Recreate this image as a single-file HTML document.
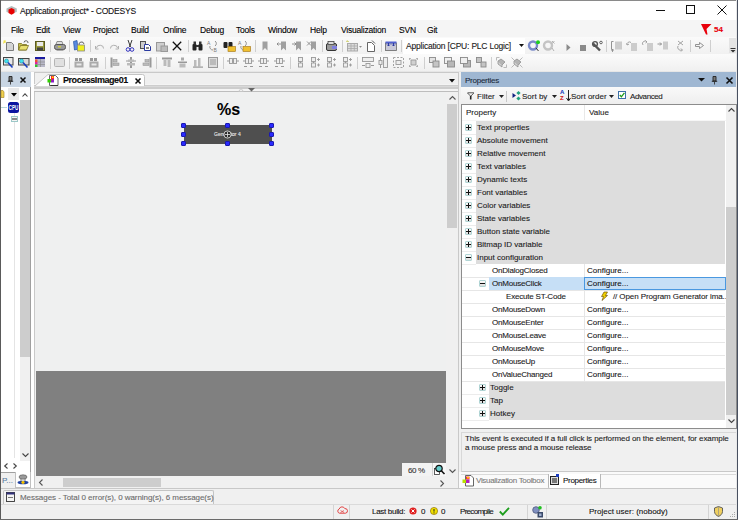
<!DOCTYPE html>
<html><head><meta charset="utf-8">
<style>
*{margin:0;padding:0;box-sizing:border-box}
html,body{width:738px;height:520px;overflow:hidden;background:#f0f0f0;font-family:"Liberation Sans",sans-serif;font-size:8px;color:#000;position:relative}
.a{position:absolute}
.t{position:absolute;white-space:nowrap;line-height:8px;font-size:8px;-webkit-text-stroke:0.1px currentColor}
svg{position:absolute;overflow:visible}
</style></head><body>
<!-- ===== frame ===== -->
<div class="a" style="left:0;top:0;width:738px;height:1px;background:#8a8a8a"></div>
<div class="a" style="left:0;top:0;width:1px;height:520px;background:#5a5a5a"></div>
<div class="a" style="left:736px;top:0;width:1px;height:520px;background:#e8e8e8"></div><div class="a" style="left:737px;top:0;width:1px;height:520px;background:#485060"></div>

<!-- ===== title bar ===== -->
<div class="a" style="left:1px;top:1px;width:735px;height:19px;background:#fff"></div>
<svg style="left:6px;top:6px" width="11" height="9"><polygon points="0.5,2.5 5.5,0 10.8,2.5 10.8,6 5.5,7.5 0.5,6" fill="#b4bcbc"/><polygon points="5.5,2 8.5,3.5 8.5,7 5.5,8.8 2.5,7 2.5,3.5" fill="#e80000"/></svg>
<div class="t" style="left:20px;top:7px;font-size:8.5px;letter-spacing:-0.2px;color:#111">Application.project* - CODESYS</div>
<!-- window controls -->
<div class="a" style="left:656px;top:10px;width:9px;height:1px;background:#111"></div>
<div class="a" style="left:686px;top:5px;width:9px;height:9px;border:1px solid #111"></div>
<svg style="left:717px;top:5px" width="10" height="10"><path d="M0.5,0.5 L9.5,9.5 M9.5,0.5 L0.5,9.5" stroke="#111" stroke-width="1"/></svg>

<!-- ===== menu bar ===== -->
<div class="a" style="left:1px;top:20px;width:735px;height:17px;background:#f5f5f5"></div>
<div class="t" style="left:11px;top:26px;font-size:8.5px;letter-spacing:-0.2px">File</div>
<div class="t" style="left:36px;top:26px;font-size:8.5px;letter-spacing:-0.2px">Edit</div>
<div class="t" style="left:63px;top:26px;font-size:8.5px;letter-spacing:-0.2px">View</div>
<div class="t" style="left:93px;top:26px;font-size:8.5px;letter-spacing:-0.2px">Project</div>
<div class="t" style="left:131px;top:26px;font-size:8.5px;letter-spacing:-0.2px">Build</div>
<div class="t" style="left:163px;top:26px;font-size:8.5px;letter-spacing:-0.2px">Online</div>
<div class="t" style="left:200px;top:26px;font-size:8.5px;letter-spacing:-0.2px">Debug</div>
<div class="t" style="left:236px;top:26px;font-size:8.5px;letter-spacing:-0.2px">Tools</div>
<div class="t" style="left:268px;top:26px;font-size:8.5px;letter-spacing:-0.2px">Window</div>
<div class="t" style="left:310px;top:26px;font-size:8.5px;letter-spacing:-0.2px">Help</div>
<div class="t" style="left:341px;top:26px;font-size:8.5px;letter-spacing:-0.2px">Visualization</div>
<div class="t" style="left:399px;top:26px;font-size:8.5px;letter-spacing:-0.2px">SVN</div>
<div class="t" style="left:427px;top:26px;font-size:8.5px;letter-spacing:-0.2px">Git</div>
<svg style="left:701px;top:24px" width="12" height="11"><polygon points="0,0 10.5,0 5.5,5 6.5,10.5 5,10.5" fill="#e8000b"/></svg>
<div class="t" style="left:714px;top:26px;font-weight:bold;color:#e8000b">54</div>

<!-- ===== toolbars ===== -->
<div class="a" style="left:1px;top:37px;width:735px;height:17px;background:linear-gradient(#fafafa,#f1f1f1)"></div>
<div class="a" style="left:1px;top:54px;width:735px;height:17px;background:linear-gradient(#fbfbfb,#f0f0f0)"></div>
<div class="a" style="left:1px;top:71px;width:735px;height:1px;background:#e6e6e6"></div>
<!--TB_START-->
<svg style="left:3px;top:40px" width="11" height="11"><path d="M3.5,2.5h5l2,2v6h-7z" fill="#d4d4d4" stroke="#7a7a7a"/><path d="M1,0l1,2.5M0,2h3M2.5,0.5l-2,3" stroke="#f0e040" stroke-width="0.9"/></svg>
<svg style="left:18px;top:41px" width="11" height="10"><path d="M0.5,2.5h3l1,1h4v5.5h-8z" fill="#c8c050" stroke="#7a7020" stroke-width="0.8"/><path d="M0.5,9 L2.5,4.5h8l-2,4.5z" fill="#e8e070" stroke="#7a7020" stroke-width="0.8"/><path d="M6,1.5 a2,2 0 0 1 4,0.5" fill="none" stroke="#555" stroke-width="0.9"/></svg>
<svg style="left:35px;top:41px" width="10" height="10"><rect x="0.5" y="0.5" width="9" height="9" fill="#9a9a40" stroke="#5a5a20"/><rect x="2" y="1" width="6" height="4" fill="#e8e8e8"/><rect x="2" y="6.5" width="6" height="3" fill="#404040"/></svg>
<div class="a" style="left:50px;top:40px;width:1px;height:12px;background:#cfcfcf"></div>
<svg style="left:54px;top:41px" width="12" height="10"><path d="M3,0.5h5l1,3h-7z" fill="#e0e0e0" stroke="#777" stroke-width="0.8"/><rect x="0.5" y="3.5" width="11" height="5" rx="2" fill="#999" stroke="#555"/><rect x="4" y="5" width="3" height="1.5" fill="#d0d040"/><rect x="2.5" y="8" width="7" height="1.5" fill="#666"/></svg>
<div class="a" style="left:69px;top:40px;width:1px;height:12px;background:#cfcfcf"></div>
<svg style="left:73px;top:40px" width="13" height="12"><path d="M0.5,1.5 L4,0.5 L5,9 L1.5,10z" fill="#5a8ae0" stroke="#2050a0" stroke-width="0.7"/><rect x="4.5" y="5" width="7" height="6" fill="#f0f020" stroke="#888" stroke-width="0.8"/><path d="M6,5 a2.5,2.5 0 0 1 5,-1" fill="none" stroke="#555" stroke-width="0.9"/></svg>
<div class="a" style="left:90px;top:40px;width:1px;height:12px;background:#cfcfcf"></div>
<svg style="left:95px;top:43px" width="9" height="7"><path d="M1.5,5 a3.5,3 0 0 1 7,0.5" fill="none" stroke="#b0b0b0" stroke-width="1"/><path d="M0.5,3v3h3" fill="none" stroke="#b0b0b0" stroke-width="1"/></svg>
<svg style="left:110px;top:43px" width="9" height="7"><path d="M7.5,5 a3.5,3 0 0 0 -7,0.5" fill="none" stroke="#b0b0b0" stroke-width="1"/><path d="M8.5,3v3h-3" fill="none" stroke="#b0b0b0" stroke-width="1"/></svg>
<svg style="left:126px;top:40px" width="8" height="12"><path d="M2,0l2.5,7M6,0l-2.5,7" stroke="#222" stroke-width="0.9"/><circle cx="2" cy="9.5" r="1.8" fill="none" stroke="#3030c0" stroke-width="1"/><circle cx="6" cy="9.5" r="1.8" fill="none" stroke="#3030c0" stroke-width="1"/></svg>
<svg style="left:140px;top:41px" width="12" height="10"><rect x="0.5" y="0.5" width="5" height="7" fill="#ccc" stroke="#444" stroke-width="0.9"/><path d="M4.5,3.5h4l2,2v4h-6z" fill="#fff" stroke="#2a3aa0" stroke-width="1"/><rect x="6" y="6" width="3" height="2" fill="#888"/></svg>
<svg style="left:156px;top:41px" width="12" height="11"><rect x="0.5" y="1.5" width="8" height="8.5" fill="#cfcfcf" stroke="#999"/><rect x="5" y="5" width="6.5" height="5.5" fill="#bbb" stroke="#999"/></svg>
<svg style="left:172px;top:41px" width="10" height="10"><path d="M0.8,0.8L9.2,9.2M9.2,0.8L0.8,9.2" stroke="#111" stroke-width="1.3"/></svg>
<div class="a" style="left:188px;top:40px;width:1px;height:12px;background:#cfcfcf"></div>
<svg style="left:192px;top:41px" width="11" height="10"><rect x="0.5" y="3" width="4" height="6.5" rx="1" fill="#222"/><rect x="6.5" y="3" width="4" height="6.5" rx="1" fill="#222"/><rect x="1.5" y="0.5" width="2.5" height="3" fill="#333"/><rect x="7" y="0.5" width="2.5" height="3" fill="#333"/><rect x="4" y="4" width="3" height="2" fill="#333"/></svg>
<svg style="left:207px;top:40px" width="13" height="12"><text x="0" y="5" font-size="5" fill="#777" font-family="Liberation Sans">A</text><text x="6.5" y="11.5" font-size="5" fill="#777" font-family="Liberation Sans">B</text><path d="M3,6 a3,3 0 0 0 3,4" fill="none" stroke="#888" stroke-width="0.9"/><path d="M8,1 a3,3 0 0 1 0,5" fill="none" stroke="#888" stroke-width="0.9"/></svg>
<svg style="left:223px;top:40px" width="13" height="12"><rect x="0.5" y="2" width="4" height="6" rx="1" fill="#222"/><rect x="5.5" y="2" width="4" height="6" rx="1" fill="#222"/><rect x="5" y="6.5" width="7.5" height="5" fill="#f0c030" stroke="#a07010" stroke-width="0.6"/></svg>
<svg style="left:238px;top:40px" width="13" height="12"><text x="0" y="5" font-size="5" fill="#777" font-family="Liberation Sans">A</text><path d="M3,6 a3,3 0 0 0 3,4" fill="none" stroke="#888" stroke-width="0.9"/><path d="M7,1 a3,3 0 0 1 0,5" fill="none" stroke="#888" stroke-width="0.9"/><rect x="5" y="6.5" width="7.5" height="5" fill="#f0c030" stroke="#a07010" stroke-width="0.6"/></svg>
<div class="a" style="left:255px;top:40px;width:1px;height:12px;background:#cfcfcf"></div>
<svg style="left:262px;top:41px" width="6" height="10"><path d="M0.5,0.5h5v9l-2.5,-2.5l-2.5,2.5z" fill="#a0a0a0"/></svg>
<svg style="left:277px;top:41px" width="10" height="10"><path d="M4,0.5h5v9l-2.5,-2.5l-2.5,2.5z" fill="#a0a0a0"/><path d="M0,3h4M1.5,1.5l-1.5,1.5l1.5,1.5" stroke="#888" stroke-width="0.9" fill="none"/></svg>
<svg style="left:292px;top:41px" width="10" height="10"><path d="M4,0.5h5v9l-2.5,-2.5l-2.5,2.5z" fill="#a0a0a0"/><path d="M0,3h4M2.5,1.5l1.5,1.5l-1.5,1.5" stroke="#888" stroke-width="0.9" fill="none"/></svg>
<svg style="left:307px;top:41px" width="10" height="10"><path d="M4,0.5h5v9l-2.5,-2.5l-2.5,2.5z" fill="#a0a0a0"/><path d="M0,0.5l4,4M4,0.5l-4,4" stroke="#888" stroke-width="0.9"/></svg>
<div class="a" style="left:322px;top:40px;width:1px;height:12px;background:#cfcfcf"></div>
<svg style="left:326px;top:41px" width="12" height="10"><rect x="0.5" y="2.5" width="10" height="7" rx="1.5" fill="#9a9a9a" stroke="#333"/><rect x="2" y="0.5" width="6" height="3" fill="#ddd" stroke="#444" stroke-width="0.8"/><rect x="6" y="5" width="5" height="3" fill="#8080e0"/></svg>
<div class="a" style="left:342px;top:40px;width:1px;height:12px;background:#cfcfcf"></div>
<svg style="left:346px;top:40px" width="17" height="12"><path d="M1,0l1,2M0,1.5h3" stroke="#d0d070" stroke-width="0.8"/><rect x="1.5" y="3.5" width="10" height="7.5" fill="#ddd" stroke="#aaa"/><path d="M1.5,6h10M1.5,8.5h10M5,3.5v7.5M8.3,3.5v7.5" stroke="#aaa" stroke-width="0.8"/><polygon points="13,6 16,6 14.5,7.8" fill="#888"/></svg>
<svg style="left:366px;top:40px" width="10" height="12"><path d="M1.5,2.5h4l3,3v6h-7z" fill="#fff" stroke="#555" stroke-width="0.9"/><path d="M6,0.5l3,3" stroke="#444" stroke-width="0.9"/></svg>
<div class="a" style="left:381px;top:40px;width:1px;height:12px;background:#cfcfcf"></div>
<svg style="left:385px;top:41px" width="12" height="10"><rect x="0.5" y="2" width="11" height="7.5" fill="#c8c8d8" stroke="#666" stroke-width="0.8"/><rect x="0.5" y="0.5" width="11" height="2" fill="#5060d0"/><path d="M3.5,2v3l-1.5,-1.5M3.5,5l1.5,-1.5M8.5,2v3l-1.5,-1.5M8.5,5l1.5,-1.5" stroke="#2030a0" stroke-width="0.9" fill="none"/></svg>
<div class="a" style="left:401px;top:40px;width:1px;height:12px;background:#cfcfcf"></div>
<div class="a" style="left:403px;top:38px;width:122px;height:16px;background:#fff"></div>
<div class="t" style="left:406px;top:42px;color:#1a1a1a;font-size:8.5px;letter-spacing:-0.2px">Application [CPU: PLC Logic]</div>
<svg style="left:519px;top:44px" width="5" height="3"><polygon points="0,0 5,0 2.5,3" fill="#111"/></svg>
<svg style="left:528px;top:40px" width="13" height="12"><circle cx="5" cy="5.5" r="4" fill="none" stroke="#7a8ac8" stroke-width="2.4"/><circle cx="10" cy="2.2" r="2" fill="#20d020"/><path d="M8,8l2.5,3" stroke="#333" stroke-width="1"/></svg>
<svg style="left:543px;top:40px" width="12" height="12"><circle cx="5" cy="5.5" r="4" fill="none" stroke="#c4c4c4" stroke-width="2.4"/><path d="M9,1l2.5,2.5M11.5,1l-2.5,2.5M9,8l2,3" stroke="#aaa" stroke-width="0.9"/></svg>
<svg style="left:566px;top:44px" width="5" height="7"><polygon points="0.5,0 4.5,3.5 0.5,7" fill="#8a8a8a"/></svg>
<svg style="left:580px;top:45px" width="6" height="6"><rect x="0" y="0" width="6" height="6" fill="#8a8a8a"/></svg>
<svg style="left:592px;top:41px" width="11" height="11"><path d="M1,2.5 L8,9.5" stroke="#555" stroke-width="2.4"/><circle cx="3" cy="3" r="2.4" fill="none" stroke="#555" stroke-width="1.4"/><circle cx="9" cy="1.5" r="1.3" fill="none" stroke="#555" stroke-width="0.9"/></svg>
<div class="a" style="left:606px;top:40px;width:1px;height:12px;background:#cfcfcf"></div>
<svg style="left:611px;top:40px" width="12" height="12"><rect x="4" y="1.5" width="7" height="8" fill="#ccc"/><path d="M2.5,1.5h-2v8h2M1.5,9.5v2M0.5,10.5l1,1l1,-1" stroke="#888" stroke-width="0.9" fill="none"/></svg>
<svg style="left:626px;top:40px" width="12" height="12"><rect x="5" y="3" width="6" height="8" fill="#ccc"/><path d="M1,5 a2.5,2.5 0 0 1 4,-2.5M0.5,3.5l1,1.5l1.5,-1" stroke="#999" stroke-width="0.9" fill="none"/></svg>
<svg style="left:642px;top:40px" width="12" height="12"><rect x="5" y="3" width="6" height="8" fill="#ccc"/><path d="M1,5 a2.5,2.5 0 0 1 4,-3M3.5,0.5l1.5,1.5l-1.5,1" stroke="#999" stroke-width="0.9" fill="none"/></svg>
<svg style="left:657px;top:40px" width="12" height="12"><rect x="6" y="1.5" width="5" height="8" fill="#ccc"/><path d="M0.5,4h4M3,2.5l1.5,1.5l-1.5,1.5" stroke="#888" stroke-width="0.9" fill="none"/></svg>
<svg style="left:676px;top:40px" width="9" height="12"><path d="M2,1l5,4M7,1l-5,4M2,6 a3,3 0 0 0 4,4M5,8.5l1.5,1.5l-1.5,1.5" stroke="#999" stroke-width="0.9" fill="none"/></svg>
<div class="a" style="left:690px;top:40px;width:1px;height:12px;background:#cfcfcf"></div>
<svg style="left:695px;top:42px" width="9" height="7"><path d="M0.5,2.5h4v-2l4,3l-4,3v-2h-4z" fill="#f4f4f4" stroke="#888" stroke-width="0.9"/></svg>
<div class="a" style="left:710px;top:40px;width:1px;height:12px;background:#cfcfcf"></div>
<div class="a" style="left:729px;top:38px;width:7px;height:15px;background:#e4e4e4"></div>
<svg style="left:730px;top:48px" width="6" height="5"><rect x="0.5" y="0" width="5" height="1" fill="#333"/><polygon points="0.5,2 5.5,2 3,4.5" fill="#333"/></svg>
<svg style="left:3px;top:57px" width="11" height="11"><rect x="0.5" y="0.5" width="9.5" height="7.5" fill="#e8e8e8" stroke="#444"/><circle cx="3.5" cy="4" r="2" fill="#40e0f0" stroke="#2090a0" stroke-width="0.6"/><path d="M5,5.5L9.5,10.5" stroke="#1a40c0" stroke-width="1.6"/></svg>
<svg style="left:18px;top:57px" width="12" height="11"><rect x="0.5" y="1.5" width="10.5" height="6.5" fill="#d8d8d8" stroke="#444"/><circle cx="3.5" cy="4" r="2" fill="#40e0f0" stroke="#2090a0" stroke-width="0.6"/><path d="M5,5.5L9.5,10.5" stroke="#1a40c0" stroke-width="1.6"/></svg>
<svg style="left:35px;top:57px" width="10" height="10"><rect x="0" y="0" width="10" height="10" fill="#b8b8c8"/><rect x="0" y="0" width="10" height="2" fill="#1a1aa0"/><rect x="0" y="2.5" width="2.5" height="2.5" fill="#f05030"/><rect x="0" y="5" width="2.5" height="2.5" fill="#e020a0"/><rect x="0" y="7.5" width="2.5" height="2.5" fill="#30c030"/><path d="M2.5,5h7.5M2.5,7.5h7.5M5.5,2v8" stroke="#888" stroke-width="0.6"/></svg>
<div class="a" style="left:50px;top:57px;width:1px;height:12px;background:#cfcfcf"></div>
<svg style="left:54px;top:58px" width="11" height="9"><rect x="0.5" y="0.5" width="10" height="8" rx="1" fill="#e0e0e0" stroke="#b4b4b4"/></svg>
<div class="a" style="left:69px;top:57px;width:1px;height:12px;background:#cfcfcf"></div>
<svg style="left:74px;top:57px" width="10" height="11"><rect x="1" y="1" width="3" height="3" fill="#999"/><rect x="5" y="1" width="3" height="3" fill="#999"/><rect x="0.5" y="4.5" width="9" height="6" fill="#aaa"/><rect x="2.5" y="6.5" width="5" height="2" fill="#e8e8e8"/></svg>
<svg style="left:89px;top:57px" width="10" height="11"><rect x="1" y="1" width="3" height="3" fill="#999"/><rect x="5" y="1" width="3" height="3" fill="#999"/><rect x="0.5" y="4.5" width="9" height="6" fill="#aaa"/><rect x="2.5" y="6.5" width="5" height="2" fill="#e8e8e8"/></svg>
<div class="a" style="left:105px;top:57px;width:1px;height:12px;background:#cfcfcf"></div>
<svg style="left:110px;top:57px" width="10" height="11"><rect x="0.5" y="0.5" width="2" height="10" fill="#999"/><rect x="3" y="2.5" width="4" height="2.5" fill="#bbb" stroke="#999" stroke-width="0.6"/><rect x="3" y="6" width="6" height="2.5" fill="#bbb" stroke="#999" stroke-width="0.6"/></svg>
<svg style="left:126px;top:57px" width="10" height="11"><rect x="4" y="0" width="2" height="11" fill="#999"/><rect x="2" y="2.5" width="6" height="2.5" fill="#bbb"/><rect x="1" y="6" width="8" height="2.5" fill="#bbb"/><path d="M0,4h2M8,4h2" stroke="#999"/></svg>
<svg style="left:142px;top:57px" width="10" height="11"><rect x="7.5" y="0.5" width="2" height="10" fill="#999"/><rect x="3" y="2.5" width="4" height="2.5" fill="#bbb" stroke="#999" stroke-width="0.6"/><rect x="1" y="6" width="6" height="2.5" fill="#bbb" stroke="#999" stroke-width="0.6"/></svg>
<div class="a" style="left:156px;top:57px;width:1px;height:12px;background:#cfcfcf"></div>
<svg style="left:162px;top:57px" width="10" height="11"><rect x="0" y="0.5" width="10" height="2" fill="#999"/><rect x="1.5" y="3" width="3" height="6" fill="#bbb"/><rect x="5.5" y="3" width="3" height="7" fill="#bbb"/></svg>
<svg style="left:178px;top:57px" width="9" height="11"><rect x="3" y="0.5" width="3" height="3" fill="#aaa"/><rect x="0" y="4.5" width="9" height="1.5" fill="#999"/><rect x="1.5" y="6.5" width="6" height="4" fill="#bbb"/></svg>
<svg style="left:193px;top:57px" width="10" height="11"><rect x="1" y="3" width="2.5" height="6.5" fill="#bbb"/><rect x="5" y="1" width="2.5" height="8.5" fill="#bbb"/><rect x="0" y="9.5" width="10" height="1.2" fill="#999"/></svg>
<svg style="left:208px;top:57px" width="10" height="11"><rect x="0.5" y="0.5" width="9" height="10" fill="#ddd" stroke="#999"/><path d="M2,3h6M2,5h6M2,7h6" stroke="#999"/></svg>
<div class="a" style="left:223px;top:57px;width:1px;height:12px;background:#cfcfcf"></div>
<svg style="left:227px;top:57px" width="12" height="11"><rect x="2.5" y="1.5" width="3" height="5" fill="#eee" stroke="#999" stroke-width="0.9"/><rect x="6.5" y="1.5" width="3" height="5" fill="#eee" stroke="#999" stroke-width="0.9"/><path d="M0,4h2.5M5.5,4h1M9.5,4h2.5" stroke="#999"/></svg>
<svg style="left:243px;top:57px" width="11" height="11"><rect x="2.5" y="1.5" width="3" height="5" fill="#eee" stroke="#999" stroke-width="0.9"/><rect x="5.5" y="1.5" width="3" height="5" fill="#eee" stroke="#999" stroke-width="0.9"/><path d="M0,4h2.5M5.5,4h0M8.5,4h2.5" stroke="#999"/><path d="M1,9.5h3M7,9.5h3" stroke="#999"/></svg>
<svg style="left:258px;top:57px" width="11" height="11"><rect x="2.5" y="1.5" width="3" height="5" fill="#eee" stroke="#999" stroke-width="0.9"/><rect x="5.5" y="1.5" width="3" height="5" fill="#eee" stroke="#999" stroke-width="0.9"/><path d="M0,4h2.5M5.5,4h0M8.5,4h2.5" stroke="#999"/><path d="M1,9.5h3M7,9.5h3" stroke="#999"/></svg>
<svg style="left:274px;top:57px" width="11" height="11"><rect x="2.5" y="1.5" width="3" height="5" fill="#eee" stroke="#999" stroke-width="0.9"/><rect x="5.5" y="1.5" width="3" height="5" fill="#eee" stroke="#999" stroke-width="0.9"/><path d="M0,4h2.5M5.5,4h0M8.5,4h2.5" stroke="#999"/><path d="M1,9.5h3M7,9.5h3" stroke="#999"/></svg>
<div class="a" style="left:290px;top:57px;width:1px;height:12px;background:#cfcfcf"></div>
<svg style="left:297px;top:57px" width="11" height="11"><rect x="1.5" y="0.5" width="4" height="4" fill="#eee" stroke="#999" stroke-width="0.9"/><rect x="1.5" y="6" width="4" height="4" fill="#eee" stroke="#999" stroke-width="0.9"/><path d="M3.5,4.5v1.5" stroke="#999"/></svg>
<svg style="left:310px;top:57px" width="11" height="11"><rect x="1.5" y="0.5" width="4" height="4" fill="#eee" stroke="#999" stroke-width="0.9"/><rect x="1.5" y="6" width="4" height="4" fill="#eee" stroke="#999" stroke-width="0.9"/><path d="M3.5,4.5v1.5" stroke="#999"/><path d="M8.5,1v3M8.5,6.5v3M7,2.5h3M7,8h3" stroke="#999" stroke-width="0.9"/></svg>
<svg style="left:326px;top:57px" width="11" height="11"><rect x="1.5" y="0.5" width="4" height="4" fill="#eee" stroke="#999" stroke-width="0.9"/><rect x="1.5" y="6" width="4" height="4" fill="#eee" stroke="#999" stroke-width="0.9"/><path d="M3.5,4.5v1.5" stroke="#999"/><path d="M8.5,1v3M8.5,6.5v3M7,2.5h3M7,8h3" stroke="#999" stroke-width="0.9"/></svg>
<svg style="left:342px;top:57px" width="11" height="11"><rect x="1.5" y="0.5" width="4" height="4" fill="#eee" stroke="#999" stroke-width="0.9"/><rect x="1.5" y="6" width="4" height="4" fill="#eee" stroke="#999" stroke-width="0.9"/><path d="M3.5,4.5v1.5" stroke="#999"/><path d="M8.5,1v3M8.5,6.5v3M7,2.5h3M7,8h3" stroke="#999" stroke-width="0.9"/></svg>
<div class="a" style="left:357px;top:57px;width:1px;height:12px;background:#cfcfcf"></div>
<svg style="left:362px;top:57px" width="12" height="11"><rect x="0.5" y="0.5" width="11" height="4" fill="#eee" stroke="#999" stroke-width="0.9"/><rect x="4" y="6.5" width="4" height="4" fill="#eee" stroke="#999" stroke-width="0.9"/><path d="M0,8.5h3M9,8.5h3" stroke="#999"/></svg>
<svg style="left:378px;top:57px" width="11" height="11"><rect x="5.5" y="0.5" width="4" height="10" fill="#eee" stroke="#999" stroke-width="0.9"/><rect x="1" y="3.5" width="3" height="4" fill="#eee" stroke="#999" stroke-width="0.9"/><path d="M2.5,0v3M2.5,8v3" stroke="#999"/></svg>
<svg style="left:393px;top:57px" width="11" height="11"><rect x="0.5" y="0.5" width="10" height="10" fill="none" stroke="#999" stroke-width="0.9" stroke-dasharray="2,1.5"/><rect x="3" y="3.5" width="5" height="4" fill="#eee" stroke="#999" stroke-width="0.9"/></svg>
<svg style="left:408px;top:57px" width="11" height="11"><rect x="3" y="3" width="5" height="5" fill="#d0d0d0" stroke="#999" stroke-width="0.9"/><path d="M1,1.5h2M1,9.5h2M8,1.5h2M8,9.5h2M1.5,1v2M9.5,1v2M1.5,8v2M9.5,8v2" stroke="#aaa" stroke-width="0.8"/></svg>
<div class="a" style="left:424px;top:57px;width:1px;height:12px;background:#cfcfcf"></div>
<svg style="left:429px;top:57px" width="11" height="11"><rect x="0.5" y="0.5" width="6" height="5" fill="#e4e4e4" stroke="#8a8a8a" stroke-width="0.9"/><rect x="4" y="4" width="6" height="6" fill="#c4c4c4" stroke="#8a8a8a" stroke-width="0.9"/></svg>
<svg style="left:444px;top:57px" width="11" height="11"><rect x="0.5" y="0.5" width="7" height="6" fill="#f0f0f0" stroke="#8a8a8a" stroke-width="0.9"/><rect x="3.5" y="4" width="7" height="6" fill="#b8b8b8" stroke="#8a8a8a" stroke-width="0.9"/></svg>
<svg style="left:460px;top:57px" width="11" height="11"><rect x="3.5" y="3.5" width="7" height="6.5" fill="#b8b8b8" stroke="#8a8a8a" stroke-width="0.9"/><rect x="0.5" y="0.5" width="7" height="6" fill="#f0f0f0" stroke="#8a8a8a" stroke-width="0.9"/></svg>
<svg style="left:476px;top:57px" width="11" height="11"><rect x="0.5" y="0.5" width="5" height="5" fill="#c4c4c4" stroke="#8a8a8a" stroke-width="0.9"/><rect x="5" y="5" width="5" height="5" fill="#c4c4c4" stroke="#8a8a8a" stroke-width="0.9"/></svg>
<div class="a" style="left:491px;top:57px;width:1px;height:12px;background:#cfcfcf"></div>
<svg style="left:496px;top:57px" width="11" height="11"><path d="M0.5,0.5v3M0.5,0.5h3M10.5,10.5v-3M10.5,10.5h-3" stroke="#aaa" stroke-width="0.8"/><path d="M2,4l3,-2l4,3l-3,3z" fill="#b4b4b4" stroke="#909090" stroke-width="0.8"/><path d="M2,4v3l4,3v-2" fill="#d0d0d0" stroke="#909090" stroke-width="0.8"/></svg>
<svg style="left:511px;top:57px" width="12" height="11"><path d="M0.5,0.5l3,3M11.5,0.5l-3,3M0.5,10.5l3,-3M11.5,10.5l-3,-3" stroke="#aaa" stroke-width="0.8"/><path d="M3,4l3,-2l4,3l-3,3z" fill="#b4b4b4" stroke="#909090" stroke-width="0.8"/><path d="M3,4v3l4,3v-2" fill="#d0d0d0" stroke="#909090" stroke-width="0.8"/></svg>
<!--TB_END-->

<!-- ===== left panel ===== -->
<div class="a" style="left:1px;top:72px;width:30px;height:15px;background:#c9d6e4"></div>
<svg style="left:7px;top:76px" width="7" height="9"><path d="M2,0.5h3v4.5h-3z" fill="#777" stroke="#222" stroke-width="0.9"/><path d="M0.8,5.3h5.4" stroke="#222" stroke-width="1"/><path d="M3.5,5.5v3" stroke="#333" stroke-width="0.9"/></svg>
<svg style="left:20px;top:77px" width="6" height="6"><path d="M0.5,0.5 L5.5,5.5 M5.5,0.5 L0.5,5.5" stroke="#111" stroke-width="1.5"/></svg>
<div class="a" style="left:1px;top:87px;width:30px;height:385px;background:#fff"></div>
<div class="a" style="left:30px;top:87px;width:1px;height:385px;background:#a0a0a0"></div>
<div class="a" style="left:1px;top:472px;width:30px;height:1px;background:#a0a0a0"></div>

<svg style="left:1px;top:90px" width="4" height="8"><path d="M0,0.5h2l1,1.5v5.5h-3z" fill="#f0d050" stroke="#a08020" stroke-width="0.6"/></svg>
<div class="a" style="left:8px;top:88px;width:11px;height:12px;background:#e9e9e9"></div>
<svg style="left:11px;top:93px" width="6" height="4"><polygon points="0,0 6,0 3,3.5" fill="#000"/></svg>
<svg style="left:22px;top:93px" width="6" height="4"><path d="M0.5,3.5 L3,0.8 L5.5,3.5" fill="none" stroke="#444" stroke-width="1.1"/></svg>
<div class="a" style="left:20px;top:100px;width:10px;height:257px;background:#cdcdcd"></div>
<div class="a" style="left:20px;top:357px;width:10px;height:104px;background:#f0f0f0"></div>
<svg style="left:22px;top:453px" width="7" height="4"><path d="M0.5,0.5 L3.5,3.5 L6.5,0.5" fill="none" stroke="#444" stroke-width="1.1"/></svg>
<div class="a" style="left:1px;top:461px;width:29px;height:11px;background:#fff"></div>
<svg style="left:4px;top:463px" width="4" height="6"><path d="M3.5,0.5 L0.7,3 L3.5,5.5" fill="none" stroke="#444" stroke-width="1.1"/></svg>
<svg style="left:13px;top:463px" width="4" height="6"><path d="M0.5,0.5 L3.3,3 L0.5,5.5" fill="none" stroke="#444" stroke-width="1.1"/></svg>
<div class="a" style="left:1px;top:107px;width:6px;height:1px;background:#b8d8d8"></div>
<div class="a" style="left:8px;top:102px;width:11px;height:11px;background:#0a14a0;border-radius:2.5px"></div>
<svg style="left:8px;top:102px" width="11" height="11"><text x="0.6" y="8" font-family="Liberation Sans" font-size="6.5" font-weight="bold" fill="#fff" textLength="9.8" lengthAdjust="spacingAndGlyphs">CPU</text></svg>
<div class="a" style="left:14px;top:113px;width:1px;height:345px;background:#e4e4e4"></div>
<div class="a" style="left:11px;top:116px;width:7px;height:6px;background:#f4f4f4;border:1px solid #9cc8c8"></div>
<div class="a" style="left:12px;top:118px;width:5px;height:2px;background:#888"></div>
<!-- bottom tabs -->
<div class="t" style="left:2px;top:477px;color:#5a7aa0">P...</div>
<div class="a" style="left:15px;top:472px;width:16px;height:16px;background:#fff;border:1px solid #c0c0c0;border-top:none"></div>
<svg style="left:17px;top:474px" width="12" height="11"><ellipse cx="6" cy="3" rx="4" ry="2.2" fill="#999" stroke="#555" stroke-width="0.6"/><path d="M4,5v3M8,5v3" stroke="#555" stroke-width="0.8"/><ellipse cx="6" cy="8.5" rx="5.5" ry="1.8" fill="#2040a0"/><circle cx="6" cy="8.3" r="1.6" fill="#f0c000"/></svg>


<!-- ===== editor ===== -->
<div class="a" style="left:31px;top:72px;width:3px;height:417px;background:#fff"></div><div class="a" style="left:34px;top:72px;width:425px;height:417px;background:#f0f0f0;border:1px solid #c9c9c9"></div>

<!-- tab strip -->
<svg style="left:449px;top:79px" width="6" height="4"><polygon points="0,0 6,0 3,3.5" fill="#111"/></svg>
<!-- ruler band -->
<div class="a" style="left:34px;top:84px;width:424px;height:1px;background:#f4f4f4"></div>
<div class="a" style="left:34px;top:85px;width:424px;height:4px;background:#cdcdcd"></div>
<div class="a" style="left:34px;top:86px;width:424px;height:1px;background:#d9d9d9"></div>
<div class="a" style="left:34px;top:89px;width:424px;height:2px;background:#f4f4f4"></div>
<div class="a" style="left:34px;top:91px;width:424px;height:1px;background:#bdbdbd"></div>
<svg style="left:34px;top:73px" width="112" height="14"><path d="M1,13 L14,1.5 L108.5,1.5 Q110.5,1.5 110.5,3.5 L110.5,13" fill="#fff" stroke="#c4c4c4" stroke-width="1"/></svg>
<svg style="left:47px;top:75px" width="13" height="12"><path d="M2.5,0.5h6l2.5,2.5v7.5h-8.5z" fill="#fff" stroke="#555" stroke-width="0.9"/><path d="M3.5,10.5h7.5" stroke="#333" stroke-width="1"/><rect x="0.5" y="4" width="3.5" height="3.5" fill="#30d000"/><rect x="4" y="1" width="3" height="3" fill="#ff2828"/><rect x="5" y="1.5" width="1.5" height="1.5" fill="#ffe000"/><rect x="4" y="4" width="3" height="3.5" fill="#8a1ac8"/><rect x="4" y="4" width="1.5" height="1.5" fill="#e02060"/></svg>
<div class="t" style="left:63px;top:76px;font-size:9px;line-height:9px;font-weight:bold;letter-spacing:-0.45px;color:#0a0a0a">ProcessImage01</div>
<svg style="left:135px;top:78px" width="6" height="6"><path d="M0.5,0.5 L5.5,5.5 M5.5,0.5 L0.5,5.5" stroke="#111" stroke-width="1.5"/></svg>
<svg style="left:238px;top:88px" width="6" height="4"><polygon points="0.5,3.5 5.5,3.5 3,0.5" fill="#f0f0f0" stroke="#c0c0c0" stroke-width="0.8"/></svg>
<svg style="left:248px;top:88px" width="8" height="4"><polygon points="0,0 7,0 3.5,3.5" fill="#666"/></svg>
<!-- canvas -->
<div class="a" style="left:35px;top:92px;width:411px;height:279px;background:#eff0f0"></div>
<div class="a" style="left:36px;top:371px;width:410px;height:105px;background:#808080"></div>

<!-- %s -->
<div class="t" style="left:217px;top:102px;font-size:16px;line-height:16px;font-weight:bold;color:#000">%s</div>
<!-- button -->
<div class="a" style="left:184px;top:125px;width:88px;height:19px;background:#4f4f4f"></div>
<div class="t" style="left:214px;top:132px;font-size:5px;line-height:5px;color:#e8e8e8">Generator 4</div>
<svg style="left:223px;top:130px" width="9" height="9"><circle cx="4.5" cy="4.5" r="3.6" fill="#2a2a2a" stroke="#d8d8d8" stroke-width="0.9"/><path d="M4.5,1.8v5.4M1.8,4.5h5.4" stroke="#e8e8e8" stroke-width="0.8"/></svg>
<!-- handles -->
<div class="a" style="left:181px;top:123px;width:5px;height:5px;background:#2a2aff;border:1px solid #1a1ab0;border-radius:1px"></div>
<div class="a" style="left:225px;top:123px;width:5px;height:5px;background:#2a2aff;border:1px solid #1a1ab0;border-radius:1px"></div>
<div class="a" style="left:269px;top:123px;width:5px;height:5px;background:#2a2aff;border:1px solid #1a1ab0;border-radius:1px"></div>
<div class="a" style="left:181px;top:132px;width:5px;height:5px;background:#2a2aff;border:1px solid #1a1ab0;border-radius:1px"></div>
<div class="a" style="left:269px;top:132px;width:5px;height:5px;background:#2a2aff;border:1px solid #1a1ab0;border-radius:1px"></div>
<div class="a" style="left:181px;top:141px;width:5px;height:5px;background:#2a2aff;border:1px solid #1a1ab0;border-radius:1px"></div>
<div class="a" style="left:225px;top:141px;width:5px;height:5px;background:#2a2aff;border:1px solid #1a1ab0;border-radius:1px"></div>
<div class="a" style="left:269px;top:141px;width:5px;height:5px;background:#2a2aff;border:1px solid #1a1ab0;border-radius:1px"></div>
<!-- vertical scrollbar -->
<div class="a" style="left:446px;top:92px;width:11px;height:384px;background:#f0f0f0"></div>
<div class="a" style="left:447px;top:104px;width:10px;height:124px;background:#cdcdcd"></div>
<svg style="left:449px;top:96px" width="7" height="4"><path d="M0.5,3.5 L3.5,0.5 L6.5,3.5" fill="none" stroke="#555" stroke-width="1.1"/></svg>
<svg style="left:449px;top:469px" width="7" height="4"><path d="M0.5,0.5 L3.5,3.5 L6.5,0.5" fill="none" stroke="#555" stroke-width="1.1"/></svg>
<!-- zoom box -->
<div class="a" style="left:402px;top:463px;width:31px;height:13px;background:#f3f3f3;border-right:1px solid #d4d4d4"></div>
<div class="t" style="left:408px;top:467px;color:#333;letter-spacing:-0.4px">60 %</div>
<div class="a" style="left:433px;top:463px;width:13px;height:13px;background:#f6f6f6"></div>
<svg style="left:433px;top:464px" width="13" height="12"><rect x="1.5" y="4.5" width="5" height="6" fill="#fff" stroke="#333" stroke-width="0.8"/><circle cx="6" cy="4.5" r="3.2" fill="#6cc" stroke="#111" stroke-width="1.2"/><path d="M8.3,6.8 L11.5,10" stroke="#111" stroke-width="1.6"/></svg>
<!-- horizontal scrollbar -->
<div class="a" style="left:35px;top:476px;width:422px;height:12px;background:#f0f0f0"></div>
<div class="a" style="left:63px;top:478px;width:98px;height:9px;background:#cdcdcd"></div>
<svg style="left:39px;top:479px" width="4" height="7"><path d="M3.5,0.5 L0.5,3.5 L3.5,6.5" fill="none" stroke="#555" stroke-width="1.1"/></svg>
<svg style="left:440px;top:480px" width="4" height="7"><path d="M0.5,0.5 L3.5,3.5 L0.5,6.5" fill="none" stroke="#555" stroke-width="1.1"/></svg>


<!-- ===== properties ===== -->
<div class="a" style="left:461px;top:72px;width:275px;height:15px;background:#9fb7d2"></div>
<div class="t" style="left:465px;top:77px;letter-spacing:-0.25px;color:#1a2a3a">Properties</div>
<svg style="left:698px;top:78px" width="7" height="4"><polygon points="0,0 7,0 3.5,3.5" fill="#111"/></svg>
<svg style="left:711px;top:76px" width="7" height="9"><path d="M2,0.5h3v4.5h-3z" fill="#777" stroke="#222" stroke-width="0.9"/><path d="M0.8,5.3h5.4" stroke="#222" stroke-width="1"/><path d="M3.5,5.5v3" stroke="#333" stroke-width="0.9"/></svg>
<svg style="left:726px;top:77px" width="7" height="7"><path d="M0.5,0.5 L6.5,6.5 M6.5,0.5 L0.5,6.5" stroke="#111" stroke-width="1.6"/></svg>
<div class="a" style="left:461px;top:87px;width:275px;height:17px;background:linear-gradient(#f9f9f9,#eeeeee)"></div>
<svg style="left:467px;top:92px" width="8" height="8"><path d="M0.5,1 L3.7,4.2 L6.9,1 M0.5,0.8h6.4" fill="none" stroke="#444" stroke-width="0.9"/><path d="M3.7,4v3.5" stroke="#222" stroke-width="1.6"/></svg>
<div class="t" style="left:477px;top:93px;color:#222">Filter</div>
<svg style="left:499px;top:95px" width="5" height="3"><polygon points="0,0 5,0 2.5,3" fill="#222"/></svg>
<div class="a" style="left:506px;top:91px;width:1px;height:11px;background:#c8c8c8"></div>
<svg style="left:512px;top:91px" width="10" height="10"><polygon points="0.5,2 4,4.5 0.5,7" fill="#102080"/><rect x="5" y="0.5" width="3" height="3" transform="rotate(45 6.5 2)" fill="#20a080"/><rect x="5" y="6" width="3" height="3" transform="rotate(45 6.5 7.5)" fill="#20a080"/></svg>
<div class="t" style="left:522px;top:93px;color:#222">Sort by</div>
<svg style="left:552px;top:95px" width="5" height="3"><polygon points="0,0 5,0 2.5,3" fill="#222"/></svg>
<div class="t" style="left:560px;top:89px;font-size:6px;line-height:6px;font-weight:bold;color:#2040c0">A</div>
<div class="t" style="left:560px;top:95px;font-size:6px;line-height:6px;font-weight:bold;color:#d02020">Z</div>
<svg style="left:566px;top:90px" width="5" height="12"><path d="M2.5,0v10M0.5,8l2,3l2,-3" stroke="#222" stroke-width="1" fill="none"/></svg>
<div class="t" style="left:571px;top:93px;color:#222">Sort order</div>
<svg style="left:609px;top:95px" width="5" height="3"><polygon points="0,0 5,0 2.5,3" fill="#222"/></svg>
<div class="a" style="left:618px;top:91px;width:8px;height:8px;background:#fff;border:1px solid #3c6fa8"></div>
<svg style="left:619px;top:92px" width="6" height="6"><path d="M0.8,3 L2.4,4.8 L5.4,0.8" stroke="#1a9a1a" stroke-width="1.3" fill="none"/></svg>
<div class="t" style="left:630px;top:93px;color:#222;letter-spacing:-0.4px">Advanced</div>
<div class="a" style="left:461px;top:104px;width:276px;height:325px;background:#fff;border:1px solid #8c8c8c"></div>
<div class="t" style="left:466px;top:109px;color:#222">Property</div>
<div class="t" style="left:589px;top:109px;color:#222">Value</div>
<div class="a" style="left:584px;top:105px;width:1px;height:15px;background:#e8e8e8"></div>
<div class="a" style="left:462px;top:120px;width:264px;height:1px;background:#f6f6f6"></div>
<div class="a" style="left:476px;top:121px;width:249px;height:143px;background:#dddddd"></div>
<div class="a" style="left:489px;top:381px;width:236px;height:39px;background:#dddddd"></div>
<div class="a" style="left:462px;top:134px;width:14px;height:1px;background:#ececec"></div>
<div class="a" style="left:465px;top:124px;width:7px;height:7px;background:linear-gradient(#fcfcfc,#dcdcdc);border:1px solid #b0d4d4;border-radius:1px"></div><div class="a" style="left:466px;top:127px;width:5px;height:1px;background:#111"></div><div class="a" style="left:468px;top:125px;width:1px;height:5px;background:#111"></div>
<div class="t" style="left:477px;top:124px;color:#1a1a1a">Text properties</div>
<div class="a" style="left:462px;top:147px;width:14px;height:1px;background:#ececec"></div>
<div class="a" style="left:465px;top:137px;width:7px;height:7px;background:linear-gradient(#fcfcfc,#dcdcdc);border:1px solid #b0d4d4;border-radius:1px"></div><div class="a" style="left:466px;top:140px;width:5px;height:1px;background:#111"></div><div class="a" style="left:468px;top:138px;width:1px;height:5px;background:#111"></div>
<div class="t" style="left:477px;top:137px;color:#1a1a1a">Absolute movement</div>
<div class="a" style="left:462px;top:160px;width:14px;height:1px;background:#ececec"></div>
<div class="a" style="left:465px;top:150px;width:7px;height:7px;background:linear-gradient(#fcfcfc,#dcdcdc);border:1px solid #b0d4d4;border-radius:1px"></div><div class="a" style="left:466px;top:153px;width:5px;height:1px;background:#111"></div><div class="a" style="left:468px;top:151px;width:1px;height:5px;background:#111"></div>
<div class="t" style="left:477px;top:150px;color:#1a1a1a">Relative movement</div>
<div class="a" style="left:462px;top:173px;width:14px;height:1px;background:#ececec"></div>
<div class="a" style="left:465px;top:163px;width:7px;height:7px;background:linear-gradient(#fcfcfc,#dcdcdc);border:1px solid #b0d4d4;border-radius:1px"></div><div class="a" style="left:466px;top:166px;width:5px;height:1px;background:#111"></div><div class="a" style="left:468px;top:164px;width:1px;height:5px;background:#111"></div>
<div class="t" style="left:477px;top:163px;color:#1a1a1a">Text variables</div>
<div class="a" style="left:462px;top:186px;width:14px;height:1px;background:#ececec"></div>
<div class="a" style="left:465px;top:176px;width:7px;height:7px;background:linear-gradient(#fcfcfc,#dcdcdc);border:1px solid #b0d4d4;border-radius:1px"></div><div class="a" style="left:466px;top:179px;width:5px;height:1px;background:#111"></div><div class="a" style="left:468px;top:177px;width:1px;height:5px;background:#111"></div>
<div class="t" style="left:477px;top:176px;color:#1a1a1a">Dynamic texts</div>
<div class="a" style="left:462px;top:199px;width:14px;height:1px;background:#ececec"></div>
<div class="a" style="left:465px;top:189px;width:7px;height:7px;background:linear-gradient(#fcfcfc,#dcdcdc);border:1px solid #b0d4d4;border-radius:1px"></div><div class="a" style="left:466px;top:192px;width:5px;height:1px;background:#111"></div><div class="a" style="left:468px;top:190px;width:1px;height:5px;background:#111"></div>
<div class="t" style="left:477px;top:189px;color:#1a1a1a">Font variables</div>
<div class="a" style="left:462px;top:212px;width:14px;height:1px;background:#ececec"></div>
<div class="a" style="left:465px;top:202px;width:7px;height:7px;background:linear-gradient(#fcfcfc,#dcdcdc);border:1px solid #b0d4d4;border-radius:1px"></div><div class="a" style="left:466px;top:205px;width:5px;height:1px;background:#111"></div><div class="a" style="left:468px;top:203px;width:1px;height:5px;background:#111"></div>
<div class="t" style="left:477px;top:202px;color:#1a1a1a">Color variables</div>
<div class="a" style="left:462px;top:225px;width:14px;height:1px;background:#ececec"></div>
<div class="a" style="left:465px;top:215px;width:7px;height:7px;background:linear-gradient(#fcfcfc,#dcdcdc);border:1px solid #b0d4d4;border-radius:1px"></div><div class="a" style="left:466px;top:218px;width:5px;height:1px;background:#111"></div><div class="a" style="left:468px;top:216px;width:1px;height:5px;background:#111"></div>
<div class="t" style="left:477px;top:215px;color:#1a1a1a">State variables</div>
<div class="a" style="left:462px;top:238px;width:14px;height:1px;background:#ececec"></div>
<div class="a" style="left:465px;top:228px;width:7px;height:7px;background:linear-gradient(#fcfcfc,#dcdcdc);border:1px solid #b0d4d4;border-radius:1px"></div><div class="a" style="left:466px;top:231px;width:5px;height:1px;background:#111"></div><div class="a" style="left:468px;top:229px;width:1px;height:5px;background:#111"></div>
<div class="t" style="left:477px;top:228px;color:#1a1a1a">Button state variable</div>
<div class="a" style="left:462px;top:251px;width:14px;height:1px;background:#ececec"></div>
<div class="a" style="left:465px;top:241px;width:7px;height:7px;background:linear-gradient(#fcfcfc,#dcdcdc);border:1px solid #b0d4d4;border-radius:1px"></div><div class="a" style="left:466px;top:244px;width:5px;height:1px;background:#111"></div><div class="a" style="left:468px;top:242px;width:1px;height:5px;background:#111"></div>
<div class="t" style="left:477px;top:241px;color:#1a1a1a">Bitmap ID variable</div>
<div class="a" style="left:462px;top:264px;width:14px;height:1px;background:#ececec"></div>
<div class="a" style="left:465px;top:254px;width:7px;height:7px;background:linear-gradient(#fcfcfc,#dcdcdc);border:1px solid #b0d4d4;border-radius:1px"></div><div class="a" style="left:466px;top:257px;width:5px;height:1px;background:#111"></div>
<div class="t" style="left:477px;top:254px;color:#1a1a1a">Input configuration</div>
<div class="a" style="left:462px;top:277px;width:263px;height:1px;background:#e6e6e6"></div>
<div class="a" style="left:584px;top:264px;width:1px;height:13px;background:#e6e6e6"></div>
<div class="t" style="left:492px;top:267px;color:#1a1a1a;letter-spacing:-0.2px">OnDialogClosed</div>
<div class="t" style="left:587px;top:267px;color:#111">Configure...</div>
<div class="a" style="left:462px;top:290px;width:263px;height:1px;background:#e6e6e6"></div>
<div class="a" style="left:584px;top:277px;width:1px;height:13px;background:#e6e6e6"></div>
<div class="a" style="left:489px;top:277px;width:95px;height:13px;background:#c6dff6"></div>
<div class="a" style="left:584px;top:277px;width:142px;height:13px;background:#c6dff6;border:1px solid #4a98e0"></div>
<div class="a" style="left:479px;top:280px;width:7px;height:7px;background:linear-gradient(#fcfcfc,#dcdcdc);border:1px solid #b0d4d4;border-radius:1px"></div><div class="a" style="left:480px;top:283px;width:5px;height:1px;background:#111"></div>
<div class="t" style="left:492px;top:280px;color:#1a1a1a;letter-spacing:-0.2px">OnMouseClick</div>
<div class="t" style="left:587px;top:280px;color:#111">Configure...</div>
<div class="a" style="left:462px;top:303px;width:263px;height:1px;background:#e6e6e6"></div>
<div class="a" style="left:584px;top:290px;width:1px;height:13px;background:#e6e6e6"></div>
<div class="t" style="left:506px;top:293px;color:#1a1a1a;letter-spacing:-0.2px">Execute ST-Code</div>
<svg style="left:601px;top:292px" width="7" height="9"><polygon points="3,0 6.5,0 4.5,3.5 6.5,3.5 1,8.5 2.5,4.5 0.5,4.5" fill="#f0d000" stroke="#604000" stroke-width="0.6"/></svg>
<div class="t" style="left:613px;top:293px;color:#1a1a1a;letter-spacing:-0.1px">// Open Program Generator ima...</div>
<div class="a" style="left:462px;top:316px;width:263px;height:1px;background:#e6e6e6"></div>
<div class="a" style="left:584px;top:303px;width:1px;height:13px;background:#e6e6e6"></div>
<div class="t" style="left:492px;top:306px;color:#1a1a1a;letter-spacing:-0.2px">OnMouseDown</div>
<div class="t" style="left:587px;top:306px;color:#111">Configure...</div>
<div class="a" style="left:462px;top:329px;width:263px;height:1px;background:#e6e6e6"></div>
<div class="a" style="left:584px;top:316px;width:1px;height:13px;background:#e6e6e6"></div>
<div class="t" style="left:492px;top:319px;color:#1a1a1a;letter-spacing:-0.2px">OnMouseEnter</div>
<div class="t" style="left:587px;top:319px;color:#111">Configure...</div>
<div class="a" style="left:462px;top:342px;width:263px;height:1px;background:#e6e6e6"></div>
<div class="a" style="left:584px;top:329px;width:1px;height:13px;background:#e6e6e6"></div>
<div class="t" style="left:492px;top:332px;color:#1a1a1a;letter-spacing:-0.2px">OnMouseLeave</div>
<div class="t" style="left:587px;top:332px;color:#111">Configure...</div>
<div class="a" style="left:462px;top:355px;width:263px;height:1px;background:#e6e6e6"></div>
<div class="a" style="left:584px;top:342px;width:1px;height:13px;background:#e6e6e6"></div>
<div class="t" style="left:492px;top:345px;color:#1a1a1a;letter-spacing:-0.2px">OnMouseMove</div>
<div class="t" style="left:587px;top:345px;color:#111">Configure...</div>
<div class="a" style="left:462px;top:368px;width:263px;height:1px;background:#e6e6e6"></div>
<div class="a" style="left:584px;top:355px;width:1px;height:13px;background:#e6e6e6"></div>
<div class="t" style="left:492px;top:358px;color:#1a1a1a;letter-spacing:-0.2px">OnMouseUp</div>
<div class="t" style="left:587px;top:358px;color:#111">Configure...</div>
<div class="a" style="left:462px;top:381px;width:263px;height:1px;background:#e6e6e6"></div>
<div class="a" style="left:584px;top:368px;width:1px;height:13px;background:#e6e6e6"></div>
<div class="t" style="left:492px;top:371px;color:#1a1a1a;letter-spacing:-0.2px">OnValueChanged</div>
<div class="t" style="left:587px;top:371px;color:#111">Configure...</div>
<div class="a" style="left:462px;top:394px;width:27px;height:1px;background:#ececec"></div>
<div class="a" style="left:479px;top:384px;width:7px;height:7px;background:linear-gradient(#fcfcfc,#dcdcdc);border:1px solid #b0d4d4;border-radius:1px"></div><div class="a" style="left:480px;top:387px;width:5px;height:1px;background:#111"></div><div class="a" style="left:482px;top:385px;width:1px;height:5px;background:#111"></div>
<div class="t" style="left:490px;top:384px;color:#1a1a1a">Toggle</div>
<div class="a" style="left:462px;top:407px;width:27px;height:1px;background:#ececec"></div>
<div class="a" style="left:479px;top:397px;width:7px;height:7px;background:linear-gradient(#fcfcfc,#dcdcdc);border:1px solid #b0d4d4;border-radius:1px"></div><div class="a" style="left:480px;top:400px;width:5px;height:1px;background:#111"></div><div class="a" style="left:482px;top:398px;width:1px;height:5px;background:#111"></div>
<div class="t" style="left:490px;top:397px;color:#1a1a1a">Tap</div>
<div class="a" style="left:462px;top:420px;width:27px;height:1px;background:#ececec"></div>
<div class="a" style="left:479px;top:410px;width:7px;height:7px;background:linear-gradient(#fcfcfc,#dcdcdc);border:1px solid #b0d4d4;border-radius:1px"></div><div class="a" style="left:480px;top:413px;width:5px;height:1px;background:#111"></div><div class="a" style="left:482px;top:411px;width:1px;height:5px;background:#111"></div>
<div class="t" style="left:490px;top:410px;color:#1a1a1a">Hotkey</div>
<div class="a" style="left:726px;top:105px;width:10px;height:323px;background:#f0f0f0"></div>
<div class="a" style="left:726px;top:207px;width:10px;height:208px;background:#cdcdcd"></div>
<svg style="left:728px;top:108px" width="7" height="4"><path d="M0.5,3.5 L3.5,0.5 L6.5,3.5" fill="none" stroke="#444" stroke-width="1.1"/></svg>
<svg style="left:728px;top:419px" width="7" height="4"><path d="M0.5,0.5 L3.5,3.5 L6.5,0.5" fill="none" stroke="#444" stroke-width="1.1"/></svg>
<div class="a" style="left:461px;top:432px;width:275px;height:40px;background:#f0f0f0;border-top:1px solid #d8d8d8;border-left:1px solid #d8d8d8;border-bottom:1px solid #c8c8c8"></div>
<div class="t" style="left:465px;top:435px;color:#222;letter-spacing:-0.09px">This event is executed if a full click is performed on the element, for example</div>
<div class="t" style="left:465px;top:444px;color:#222;letter-spacing:-0.09px">a mouse press and a mouse release</div>
<div class="a" style="left:459px;top:472px;width:277px;height:16px;background:#fafafa"></div><div class="a" style="left:461px;top:474px;width:275px;height:1px;background:#dadada"></div>
<svg style="left:462px;top:475px" width="13" height="12"><path d="M3.5,0.5h5.5l2.5,2.5v8h-8z" fill="#fff" stroke="#555" stroke-width="0.9"/><rect x="0.5" y="4.5" width="3.5" height="3.5" fill="#b8e000"/><rect x="4" y="1.5" width="3.5" height="3" fill="#ff3030"/><rect x="5" y="2" width="2" height="1.5" fill="#ffd000"/><rect x="4" y="4.5" width="3.5" height="3.5" fill="#b020c0"/></svg>
<div class="t" style="left:476px;top:477px;color:#7a7a7a;letter-spacing:-0.3px">Visualization Toolbox</div>
<div class="a" style="left:548px;top:474px;width:53px;height:15px;background:#fff;border:1px solid #b8b8b8;border-top:none;border-radius:0 0 2px 2px"></div>
<svg style="left:550px;top:474px" width="10" height="11"><rect x="0.5" y="2.5" width="8" height="8" fill="#ddd" stroke="#222"/><rect x="2" y="4" width="5" height="5" fill="#777"/><rect x="6" y="0" width="3" height="3" fill="#1a3cc0"/></svg>
<div class="t" style="left:563px;top:477px;color:#111;letter-spacing:-0.3px">Properties</div>

<!-- ===== messages bar ===== -->
<div class="a" style="left:1px;top:488px;width:735px;height:1px;background:#c8c8c8"></div>

<div class="a" style="left:1px;top:489px;width:735px;height:15px;background:#f0f0f0"></div>
<div class="a" style="left:3px;top:490px;width:211px;height:14px;background:#f4f4f4;border:1px solid #c4c4c4;border-bottom:none;border-radius:2px 2px 0 0"></div>
<svg style="left:6px;top:492px" width="9" height="10"><rect x="0.5" y="0.5" width="8" height="9" fill="#f4f4f4" stroke="#333" stroke-width="0.9"/><rect x="0.5" y="0.5" width="8" height="2" fill="#30307a"/><rect x="2" y="5" width="5" height="1" fill="#777"/></svg>
<div class="t" style="left:20px;top:494px;color:#6a6a6a;letter-spacing:-0.06px">Messages - Total 0 error(s), 0 warning(s), 6 message(s)</div>


<!-- ===== status bar ===== -->
<div class="a" style="left:1px;top:504px;width:735px;height:15px;background:#f0f0f0;border-top:1px solid #dadada"></div>
<div class="a" style="left:0;top:519px;width:738px;height:1px;background:#6a6a6a"></div>

<div class="a" style="left:333px;top:505px;width:1px;height:14px;background:#d4d4d4"></div>
<div class="a" style="left:349px;top:505px;width:1px;height:14px;background:#d4d4d4"></div>
<svg style="left:337px;top:506px" width="11" height="8"><path d="M2.5,7.2 A2.2,2.2 0 0 1 2.2,3 A3,3 0 0 1 7.8,2.6 A2.3,2.3 0 0 1 8.5,7.2 Z" fill="none" stroke="#e03030" stroke-width="0.9"/><path d="M3.5,4.5 L7,6.5 M7,4.5 L3.5,6.5" stroke="#e03030" stroke-width="0.6"/></svg>
<div class="t" style="left:372px;top:508px;color:#111;letter-spacing:-0.3px">Last build:</div>
<svg style="left:409px;top:507px" width="8" height="8"><circle cx="4" cy="4" r="3.6" fill="#e02020"/><path d="M2.5,2.5l3,3M5.5,2.5l-3,3" stroke="#fff" stroke-width="1"/></svg>
<div class="t" style="left:421px;top:508px;color:#111">0</div>
<svg style="left:430px;top:507px" width="8" height="8"><circle cx="4" cy="4" r="3.6" fill="#f0e000" stroke="#806000" stroke-width="0.6"/><path d="M4,2v2.6M4,5.4v1" stroke="#222" stroke-width="1"/></svg>
<div class="t" style="left:441px;top:508px;color:#111">0</div>
<div class="t" style="left:460px;top:508px;color:#111;letter-spacing:-0.7px">Precompile</div>
<svg style="left:499px;top:507px" width="11" height="9"><path d="M0.8,4.5 L3.8,7.6 L10,0.8" fill="none" stroke="#1e9e1e" stroke-width="1.8"/></svg>
<div class="a" style="left:527px;top:505px;width:1px;height:14px;background:#d4d4d4"></div>
<svg style="left:532px;top:506px" width="12" height="12"><circle cx="4" cy="4" r="3.3" fill="#8090c0" stroke="#505a80" stroke-width="0.8"/><circle cx="8" cy="1.8" r="1.8" fill="#20c020"/><rect x="5.5" y="6" width="5.5" height="5.5" fill="#3a4a6a"/><rect x="7" y="7.5" width="2.5" height="2.5" fill="#a0b0d0"/></svg>
<div class="a" style="left:546px;top:505px;width:1px;height:14px;background:#d4d4d4"></div>
<div class="t" style="left:589px;top:508px;color:#111">Project user: (nobody)</div>
<div class="a" style="left:708px;top:505px;width:1px;height:14px;background:#d4d4d4"></div>
<svg style="left:714px;top:506px" width="9" height="11"><path d="M4.5,0.5 L8.5,2 V5.5 C8.5,8 6.5,9.5 4.5,10.5 C2.5,9.5 0.5,8 0.5,5.5 V2 Z" fill="#f0d060" stroke="#555" stroke-width="0.9"/><path d="M4.5,1 V10" stroke="#888" stroke-width="0.6"/></svg>
<svg style="left:729px;top:511px" width="7" height="7"><rect x="5" y="1" width="1" height="1" fill="#aaa"/><rect x="3" y="3" width="1" height="1" fill="#aaa"/><rect x="5" y="3" width="1" height="1" fill="#aaa"/><rect x="1" y="5" width="1" height="1" fill="#aaa"/><rect x="3" y="5" width="1" height="1" fill="#aaa"/><rect x="5" y="5" width="1" height="1" fill="#aaa"/></svg>

</body></html>
